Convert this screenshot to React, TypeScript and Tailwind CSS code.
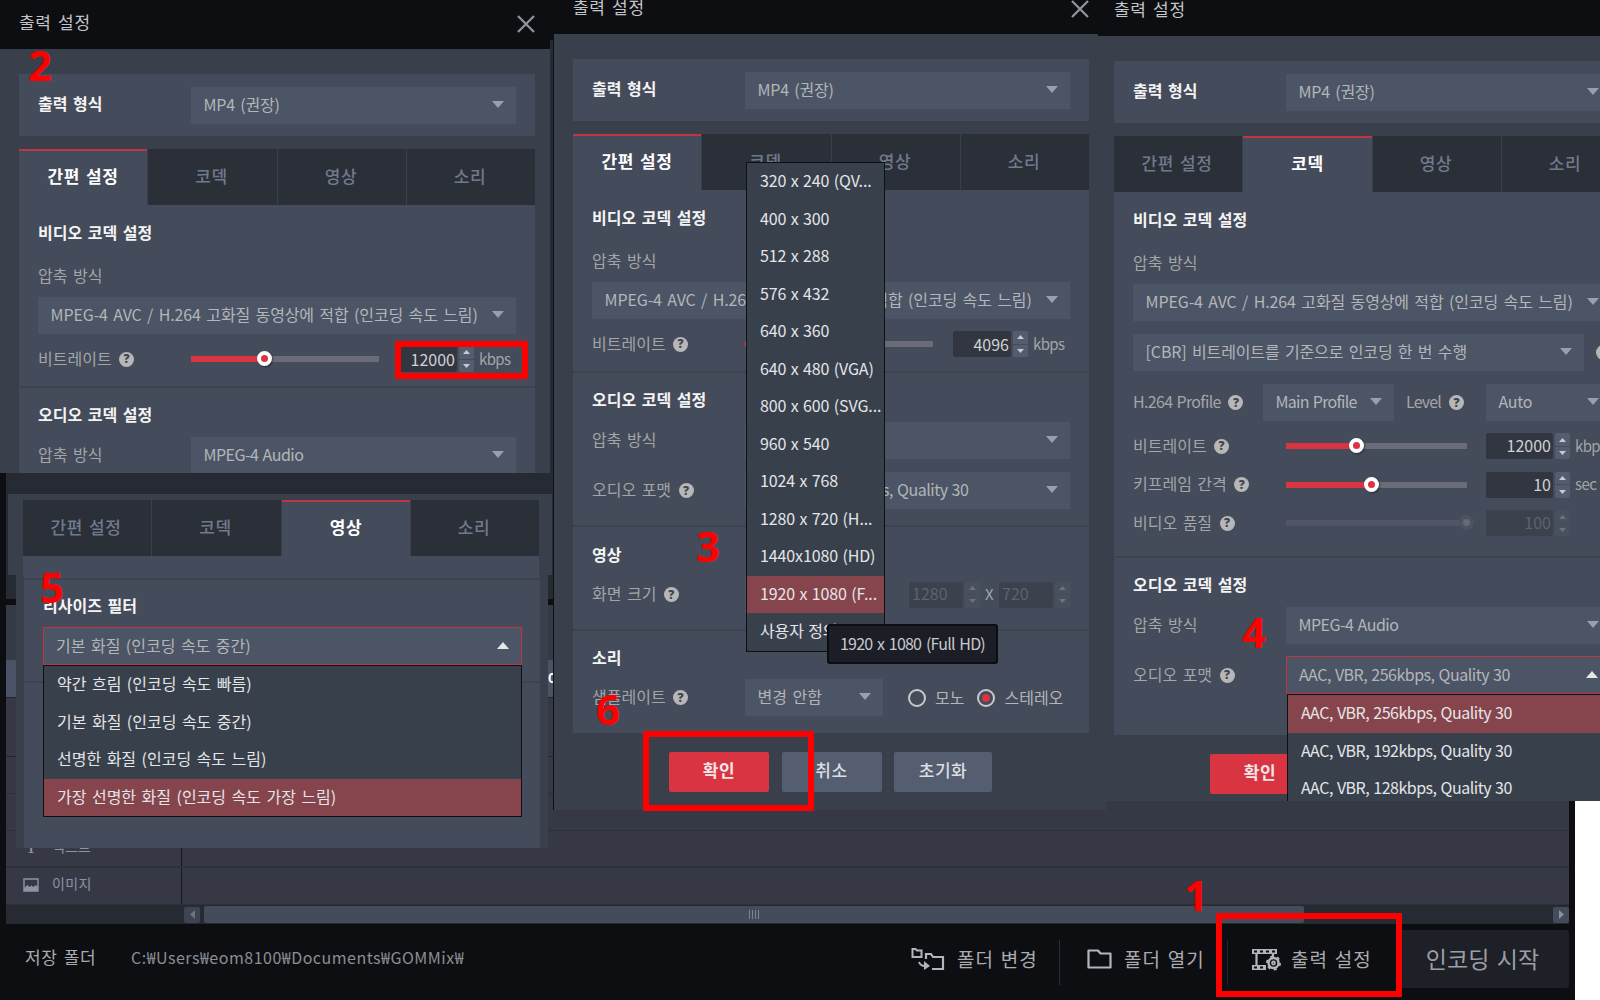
import type { ReactNode } from "react";

type TabName = "간편 설정" | "코덱" | "영상" | "소리";

const TABS: TabName[] = ["간편 설정", "코덱", "영상", "소리"];

const RESOLUTIONS = [
  "320 x 240 (QV...",
  "400 x 300",
  "512 x 288",
  "576 x 432",
  "640 x 360",
  "640 x 480 (VGA)",
  "800 x 600 (SVG...",
  "960 x 540",
  "1024 x 768",
  "1280 x 720 (H...",
  "1440x1080 (HD)",
  "1920 x 1080 (F...",
  "사용자 정의",
];

const AUDIO_FORMATS = [
  "AAC, VBR, 256kbps, Quality 30",
  "AAC, VBR, 192kbps, Quality 30",
  "AAC, VBR, 128kbps, Quality 30",
];

const RESIZE_FILTERS = [
  "약간 흐림 (인코딩 속도 빠름)",
  "기본 화질 (인코딩 속도 중간)",
  "선명한 화질 (인코딩 속도 느림)",
  "가장 선명한 화질 (인코딩 속도 가장 느림)",
];

const CODEC = "MPEG-4 AVC / H.264 고화질 동영상에 적합 (인코딩 속도 느림)";

// Tighter setting for values without any Hangul
const LATIN = "tracking-[-0.5px] [word-spacing:1px]";

function Caret({ up = false }: { up?: boolean }) {
  return (
    <svg width="12" height="7" viewBox="0 0 12 7" className="shrink-0">
      {up ? <path d="M0 7 6 0l6 7z" fill="#e6e6e8" /> : <path d="M0 0h12L6 7z" fill="#9a9fa9" />}
    </svg>
  );
}

function Help() {
  return (
    <span className="flex size-[15px] shrink-0 items-center justify-center rounded-full bg-[#b7b7b7] font-['Open_Sans',sans-serif] text-[12px] font-extrabold leading-none text-[#3f4552]">
      ?
    </span>
  );
}

function Select({ value, className = "", open = false }: { value: string; className?: string; open?: boolean }) {
  return (
    <div
      className={`flex shrink-0 items-center justify-between pr-3 pb-[2px] text-[#b3b5b9] ${
        open ? "h-[38px] border border-[#c23442] bg-[#4c5565] pl-[12px]" : "h-[37px] bg-[#4c5565] pl-[12.5px]"
      } ${className}`}
    >
      <span className="pb-px">{value}</span>
      <Caret up={open} />
    </div>
  );
}

function Label({ children, help = false }: { children: ReactNode; help?: boolean }) {
  return (
    <div className="flex w-[153px] shrink-0 items-center gap-[7.5px] text-[#a3a5a9]">
      <span className="pb-[3px]">{children}</span>
      {help && <Help />}
    </div>
  );
}

function Heading({ children, className }: { children: ReactNode; className: string }) {
  return <h3 className={`flex items-center font-bold text-[#f4f4f5] ${className}`}>{children}</h3>;
}

function Divider() {
  return <div className="-mx-[19px] h-[2px] bg-[#3d434f]" />;
}

function Slider({ percent, className, disabled = false }: { percent: number; className: string; disabled?: boolean }) {
  return (
    <div className={`relative h-[6px] shrink-0 ${disabled ? "bg-[#505665]" : "bg-[#6a6d79]"} ${className}`}>
      {!disabled && <div className="h-full bg-[#d93441]" style={{ width: `${percent}%` }} />}
      <div
        className={`absolute -top-[5px] -ml-[7.5px] size-[15px] rounded-full border-4 ${
          disabled ? "border-[#4d5362] bg-[#646a78]" : "border-white bg-[#d93441] shadow-[1px_1px_2px_#0006]"
        }`}
        style={{ left: `${percent}%` }}
      />
    </div>
  );
}

function NumberBox({ value, className, disabled = false }: { value: string; className: string; disabled?: boolean }) {
  return (
    <div className="flex h-[26px] shrink-0 gap-[2px]">
      <div
        className={`flex items-center rounded-[2px] ${
          disabled ? "bg-[#3b414d] text-[#5e636e]" : "bg-[#323641] text-[#cfd1d4]"
        } ${className}`}
      >
        {value}
      </div>
      <div className={`flex w-[15px] flex-col gap-px ${disabled ? "opacity-30" : ""}`}>
        <div className="flex flex-1 items-center justify-center rounded-t-[2px] bg-[#535d6f]">
          <svg width="7" height="4" viewBox="0 0 7 4">
            <path d="M0 4 3.5 0 7 4z" fill="#c8cacd" />
          </svg>
        </div>
        <div className="flex flex-1 items-center justify-center rounded-b-[2px] bg-[#535d6f]">
          <svg width="7" height="4" viewBox="0 0 7 4">
            <path d="M0 0h7L3.5 4z" fill="#c8cacd" />
          </svg>
        </div>
      </div>
    </div>
  );
}

function Unit({ children }: { children: ReactNode }) {
  return <span className="ml-[5px] pb-[2px] text-[15px] tracking-[-0.6px] text-[#a3a5a9]">{children}</span>;
}

function Tabs({ active }: { active: TabName }) {
  return (
    <div className="grid h-[56px] w-[516px] grid-cols-[128px_129px_128px_128px] gap-px bg-[#3a404b] text-[17px] tracking-[0.5px]">
      {TABS.map((tab) => (
        <div
          key={tab}
          className={`flex items-center justify-center ${
            tab === active
              ? "border-t-2 border-[#c23442] bg-[#444b5a] pb-[6px] font-bold text-white"
              : "bg-[#2b2f37] pr-[2px] pb-[4px] font-medium text-[#707a8d]"
          }`}
        >
          {tab}
        </div>
      ))}
    </div>
  );
}

function OptionList({ options, selected, className }: { options: string[]; selected: number; className: string }) {
  return (
    <ul className={`absolute z-10 overflow-hidden border border-[#0f1013] bg-[#38404c] text-[#e4e5e7] ${className}`}>
      {options.map((option, i) => (
        <li
          key={option}
          className={`flex h-[37.5px] items-center pb-[3px] pl-[13px] ${i === selected ? "bg-[#86454d]" : ""}`}
        >
          {option}
        </li>
      ))}
    </ul>
  );
}

function Radio({ label, checked = false }: { label: string; checked?: boolean }) {
  return (
    <div className="flex items-center gap-[9px] text-[#b3b5b9]">
      <span className="flex size-[18px] items-center justify-center rounded-full border-2 border-[#c9c9cb]">
        {checked && <span className="size-2 rounded-full bg-[#d93441]" />}
      </span>
      <span className="pb-[2px]">{label}</span>
    </div>
  );
}

function DialogButtons() {
  return (
    <div className="mt-[19px] ml-[96px] flex gap-[12.5px] text-[17px] font-medium tracking-[0.5px]">
      <div className="flex h-10 w-[100px] items-center justify-center rounded-[2px] bg-[#d93441] pb-[5px] font-bold text-[#f3e6e7]">확인</div>
      <div className="flex h-10 w-[100px] items-center justify-center rounded-[2px] bg-[#545e70] pb-[5px] text-[#dcdde0]">취소</div>
      <div className="flex h-10 w-[98px] items-center justify-center rounded-[2px] bg-[#545e70] pb-[5px] text-[#dcdde0]">초기화</div>
    </div>
  );
}

function SettingsDialog({ tab, children }: { tab: TabName; children: ReactNode }) {
  return (
    <div className="w-[554px]">
      <header className="flex h-[49px] items-center justify-between bg-[#0d0e12] pr-[19px] pb-[6px] pl-[19px] text-[17px] tracking-[0.7px] text-[#c4c5c8]">
        <span>출력 설정</span>
        <svg width="18" height="18" viewBox="0 0 18 18" className="translate-y-[2px]">
          <path d="M1 1l16 16M17 1 1 17" stroke="#93959c" strokeWidth="2.2" />
        </svg>
      </header>
      <div className="pt-[25px] pl-[19px]">
        <div className="flex h-[62px] w-[516px] items-center bg-[#444b5a] pl-[19px]">
          <div className="w-[153px] pb-[4px] font-bold text-[#f4f4f5]">출력 형식</div>
          <Select value="MP4 (권장)" className="w-[325px] tracking-[-0.2px]" />
        </div>
        <div className="mt-[13px]">
          <Tabs active={tab} />
        </div>
        <div className="w-[516px] bg-[#444b5a] px-[19px]">
          <Heading className="h-[56px] pb-[3px]">비디오 코덱 설정</Heading>
          <div className="mb-[6px] flex h-[30px] items-center">
            <Label>압축 방식</Label>
          </div>
          <Select value={CODEC} className="w-[478px] tracking-[-0.1px]" />
          {children}
        </div>
        <DialogButtons />
      </div>
    </div>
  );
}

function SimplePanel({ bitrate, percent }: { bitrate: string; percent: number }) {
  return (
    <>
      <div className="mb-[2px] flex h-[50px] items-center">
        <Label help>비트레이트</Label>
        <Slider percent={percent} className="mr-[20px] w-[188px]" />
        <NumberBox value={bitrate} className="w-[58px] justify-end pr-[2px]" />
        <Unit>kbps</Unit>
      </div>
      <Divider />
      <Heading className="h-[49px] pt-[3px]">오디오 코덱 설정</Heading>
      <div className="flex items-center">
        <Label>압축 방식</Label>
        <Select value="MPEG-4 Audio" className={`w-[325px] ${LATIN}`} />
      </div>
      <div className="mt-[13px] mb-[16px] flex items-center">
        <Label help>오디오 포맷</Label>
        <Select value="AAC, VBR, 256kbps, Quality 30" className={`w-[325px] ${LATIN}`} />
      </div>
      <Divider />
      <Heading className="h-[49px] pt-[5px]">영상</Heading>
      <div className="mb-[16px] flex h-[37px] items-center">
        <Label help>화면 크기</Label>
        <Select value="" className="mr-[26px] w-[138px]" />
        <NumberBox value="1280" className="w-[54px] pb-[3px] pl-[3px]" disabled />
        <span className="mx-[5px] w-[9px] pb-[3px] text-[15px] text-[#a3a5a9]">X</span>
        <NumberBox value="720" className="w-[54px] pb-[3px] pl-[3px]" disabled />
      </div>
      <Divider />
      <Heading className="h-[48px] pt-[4px]">소리</Heading>
      <div className="flex items-center pb-[17px]">
        <Label help>샘플레이트</Label>
        <Select value="변경 안함" className="mr-[25px] w-[138px]" />
        <Radio label="모노" />
        <div className="ml-[13px]">
          <Radio label="스테레오" checked />
        </div>
      </div>
    </>
  );
}

function CodecPanel() {
  return (
    <>
      <div className="mt-[13px] flex items-center gap-[12px]">
        <Select value="[CBR] 비트레이트를 기준으로 인코딩 한 번 수행" className="w-[451px] tracking-[-0.12px]" />
        <Help />
      </div>
      <div className="mt-[13px] mb-[6px] flex items-center">
        <div className="w-[130px] tracking-[-0.65px] [word-spacing:1px]">
          <Label help>H.264 Profile</Label>
        </div>
        <Select value="Main Profile" className="w-[131px] tracking-[-0.7px] [word-spacing:1px]" />
        <div className="ml-[12px] w-[80px] tracking-[-0.8px]">
          <Label help>Level</Label>
        </div>
        <Select value="Auto" className="w-[125px] tracking-[-0.3px]" />
      </div>
      <div className="flex h-[38.5px] items-center">
        <Label help>비트레이트</Label>
        <Slider percent={38.7} className="mr-[19px] w-[181px]" />
        <NumberBox value="12000" className="w-[67px] justify-end pr-[2px] pb-[2px]" />
        <Unit>kbps</Unit>
      </div>
      <div className="flex h-[38.5px] items-center">
        <Label help>키프레임 간격</Label>
        <Slider percent={47} className="mr-[19px] w-[181px]" />
        <NumberBox value="10" className="w-[67px] justify-end pr-[2px] pb-[2px]" />
        <Unit>sec</Unit>
      </div>
      <div className="mb-[13.5px] flex h-[38.5px] items-center">
        <Label help>비디오 품질</Label>
        <Slider percent={99.5} className="mr-[19px] w-[181px]" disabled />
        <NumberBox value="100" className="w-[67px] justify-end pr-[2px] pb-[2px]" disabled />
      </div>
      <Divider />
      <Heading className="h-[49px] pt-[3px]">오디오 코덱 설정</Heading>
      <div className="flex items-center">
        <Label>압축 방식</Label>
        <Select value="MPEG-4 Audio" className={`w-[325px] ${LATIN}`} />
      </div>
      <div className="mt-[12px] flex items-center pb-[41px]">
        <Label help>오디오 포맷</Label>
        <div className={`relative ${LATIN}`}>
          <Select value={AUDIO_FORMATS[0]} className="w-[325px]" open />
          <OptionList options={AUDIO_FORMATS} selected={0} className="top-[38px] left-px w-[325px]" />
        </div>
      </div>
    </>
  );
}

function VideoTabWindow() {
  return (
    <section className="absolute top-[494px] left-[8px] w-[544px]">
      <div className="h-[81px] bg-[#3a404b] pt-[6px] pl-[15px]">
        <Tabs active="영상" />
        <div className="h-[19px] w-[516px] bg-[#444b5a]" />
      </div>
      <div className="ml-[8px] h-[273px] w-[532px] bg-[#3a404b] pl-[8px]">
        <div className="h-full w-[516px] bg-[#444b5a] px-[19px] pt-[3px]">
          <Divider />
          <Heading className="h-[47px] pt-[3px]">리사이즈 필터</Heading>
          <div className="relative">
            <Select value="기본 화질 (인코딩 속도 중간)" className="w-[479px]" open />
            <OptionList options={RESIZE_FILTERS} selected={3} className="top-[38px] left-0 w-[479px]" />
          </div>
          <div className="mt-[16px]">
            <Divider />
          </div>
        </div>
      </div>
    </section>
  );
}

// Timeline of the editor, only its edges show between the windows
function Timeline() {
  return (
    <div className="mr-[6px] ml-[6px] flex h-[924px] flex-col bg-[#363945]">
      <div className="h-[599px] bg-[#262a32]" />
      <div className="h-[6px] bg-[#0d0e12]" />
      <div className="h-[55px] bg-[#363a46]" />
      <div className="flex h-[37px] items-center bg-[#4a5365] pb-[4px] pl-[542px] text-[14px] font-bold text-white">0</div>
      <div className="h-[60px] border-y border-[#23262d]" />
      <div className="h-[37px] border-b border-[#2c3037]" />
      <div className="h-[37px] border-b border-[#2c3037]" />
      <div className="flex h-[37px] border-b-2 border-[#2c3037] text-[14px] text-[#8b93a6]">
        <div className="flex w-[176px] items-center gap-[15px] border-r border-[#17191e] pb-[5px] pl-[19px]">
          <span className="w-[12px] font-['Liberation_Serif',serif] text-[20px]">T</span>
          <span>텍스트</span>
        </div>
      </div>
      <div className="flex h-[37px] border-b border-[#2c3037] text-[14px] text-[#8b93a6]">
        <div className="flex w-[176px] items-center gap-[13px] border-r border-[#17191e] pb-[6px] pl-[17px]">
          <svg width="16" height="14" viewBox="0 0 16 14" className="translate-y-[2px]">
            <path d="M1 1h14v12H1z" fill="none" stroke="#8b93a6" strokeWidth="1.4" />
            <path d="M1 10l3.500-3 2 2 2-1.500 2 1.500 2-2 2.500 2v4H1z" fill="#8b93a6" />
          </svg>
          <span className="tracking-[0.4px]">이미지</span>
        </div>
      </div>
      <div className="flex flex-1 items-center bg-[#262a32] pl-[178px]">
        <div className="flex h-4 w-4 items-center justify-center rounded-[2px] bg-[#3e4452]">
          <svg width="5" height="9" viewBox="0 0 5 9"><path d="M5 0v9L0 4.500z" fill="#6c7586" /></svg>
        </div>
        <div className="ml-1 flex h-[17px] w-[1100px] items-center justify-center gap-[2px] rounded-[2px] bg-[#444b5a]">
          <span className="h-[9px] w-px bg-[#7b8293]" />
          <span className="h-[9px] w-px bg-[#7b8293]" />
          <span className="h-[9px] w-px bg-[#7b8293]" />
          <span className="h-[9px] w-px bg-[#7b8293]" />
        </div>
        <div className="ml-auto flex h-4 w-4 items-center justify-center rounded-[2px] bg-[#444b5a]">
          <svg width="5" height="9" viewBox="0 0 5 9"><path d="M0 0v9l5-4.500z" fill="#8a909d" /></svg>
        </div>
      </div>
    </div>
  );
}

function Footer() {
  return (
    <footer className="flex h-[76px] items-center pr-[6px] pl-[25px] text-[19px] tracking-[0.9px] text-[#a9abb0]">
      <span className="w-[106px] shrink-0 pb-[11px] text-[17px] tracking-[0.6px]">저장 폴더</span>
      <span className="w-[780px] shrink-0 pb-[10px] text-[16px] tracking-[0.5px] text-[#8b8e94]">
        C:₩Users₩eom8100₩Documents₩GOMMix₩
      </span>
      <svg width="34" height="24" viewBox="0 0 34 24" fill="none" stroke="#b4b5ba" strokeWidth="2" className="mb-[6px] shrink-0">
        <path d="M1.500 2h3l1.500 1.500H10.500V10h-9z" />
        <path d="M15 12V7h5l2 3h10v12H21" strokeWidth="2.200" />
        <path d="M8 15c1 3 3 4 6 4" />
        <path d="M13 14l6 5-6 4z" fill="#b4b5ba" stroke="none" />
      </svg>
      <span className="ml-[12px] w-[102px] shrink-0 pb-[8px]">폴더 변경</span>
      <div className="h-[45px] w-px shrink-0 bg-[#2c2e35]" />
      <svg width="25" height="20" viewBox="0 0 25 20" fill="none" stroke="#b4b5ba" strokeWidth="2.200" className="mb-[6px] ml-[27px] shrink-0">
        <path d="M1.500 18.500v-17H11l2.500 3h10v14z" strokeLinejoin="round" />
      </svg>
      <span className="ml-[12px] w-[103px] shrink-0 pb-[8px]">폴더 열기</span>
      <div className="h-[45px] w-px shrink-0 bg-[#23262d]" />
      <svg width="29" height="22" viewBox="0 0 29 22" fill="none" stroke="#b4b5ba" className="mb-[5px] ml-[24px] shrink-0">
        <path d="M0 2.500h25M0 18.500h14" strokeWidth="5" />
        <path d="M2 2.500h22M2 18.500h12" stroke="#0d0e12" strokeWidth="2" strokeDasharray="3 3" />
        <path d="M4.500 4v13M21 4v4" strokeWidth="2.200" />
        <circle cx="21.500" cy="14" r="5" strokeWidth="2.400" />
        <circle cx="21.500" cy="14" r="1.500" strokeWidth="1.800" />
        <circle cx="21.500" cy="14" r="6.600" strokeWidth="1.800" strokeDasharray="3 3.910" />
      </svg>
      <span className="ml-[10px] w-[105px] shrink-0 pb-[8px]">출력 설정</span>
      <div className="mb-[6px] flex h-[58px] flex-1 items-center justify-center rounded-[3px] bg-[#1e2028] pb-[2px] text-[23px] tracking-[0.1px] text-[#9c9ea5]">
        인코딩 시작
      </div>
    </footer>
  );
}

function Step({ n, className }: { n: number; className: string }) {
  return (
    <span className={`absolute z-20 font-['Noto_Sans',sans-serif] text-[42px] leading-none font-bold text-[#ff0000] ${className}`}>
      {n}
    </span>
  );
}

function Mark({ className }: { className: string }) {
  return <div className={`absolute z-20 border-[6px] border-[#ff0000] ${className}`} />;
}

export default function App() {
  return (
    <main className="relative h-[1000px] w-[1600px] overflow-hidden bg-white font-['Noto_Sans_CJK_KR',sans-serif] text-[16px] leading-none whitespace-nowrap [word-spacing:1.9px]">
      <div className="h-full w-[1575px] bg-[#0d0e12]">
        <Timeline />
        <Footer />
      </div>

      <VideoTabWindow />

      <section className="absolute top-0 left-0 h-[473px] w-[550px] overflow-hidden bg-[#3a404b]">
        <SettingsDialog tab="간편 설정">
          <SimplePanel bitrate="12000" percent={39.3} />
        </SettingsDialog>
      </section>

      <div className="absolute top-0 left-[550px] h-[40px] w-[5px] bg-[#0d0e12]" />
      <section className="absolute top-0 left-[553px] h-[810px] w-[553px] overflow-hidden border-l border-[#0f1013] bg-[#3a404b]">
        <div className="-mt-[15px]">
          <SettingsDialog tab="간편 설정">
            <SimplePanel bitrate="4096" percent={20} />
          </SettingsDialog>
        </div>
        <OptionList
          options={RESOLUTIONS}
          selected={11}
          className="top-[162px] left-[192px] w-[139px] tracking-[-0.12px] [word-spacing:1px]"
        />
        <div className="absolute top-[624px] left-[273px] z-10 flex h-10 w-[171px] items-center justify-center rounded-[3px] border-2 border-[#0c0d10] bg-[#1b1e27] pb-[2px] text-[16px] tracking-[-0.8px] text-[#c8c9cc]">
          1920 x 1080 (Full HD)
        </div>
      </section>

      <section className="absolute top-0 left-[1098px] h-[801px] w-[502px] overflow-hidden bg-[#3a404b]">
        <div className="-mt-[13px] -ml-[3px] w-[554px]">
          <SettingsDialog tab="코덱">
            <CodecPanel />
          </SettingsDialog>
        </div>
      </section>

      <Step n={2} className="top-[44px] left-[28px]" />
      <Step n={5} className="top-[566px] left-[40px]" />
      <Step n={3} className="top-[525px] left-[696px]" />
      <Step n={6} className="top-[688px] left-[596px]" />
      <Step n={4} className="top-[611px] left-[1242px]" />
      <Step n={1} className="top-[874px] left-[1184px]" />
      <Mark className="top-[341px] left-[395px] h-[38px] w-[133px]" />
      <Mark className="top-[731px] left-[643px] h-[80px] w-[171px]" />
      <Mark className="top-[913px] left-[1216px] h-[84px] w-[186px]" />
    </main>
  );
}
